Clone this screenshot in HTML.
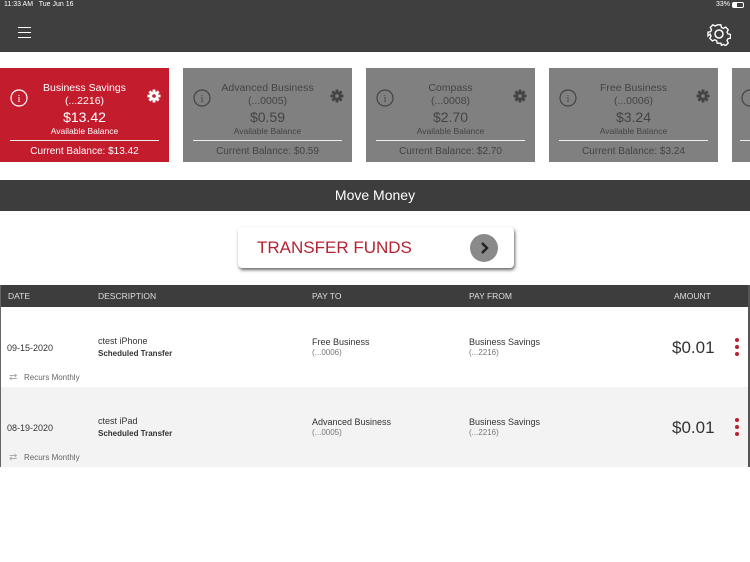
<!DOCTYPE html>
<html><head><meta charset="utf-8"><style>
*{margin:0;padding:0;box-sizing:border-box}
body{width:750px;height:562px;background:#fff;font-family:"Liberation Sans",sans-serif;position:relative;overflow:hidden}
.abs{position:absolute}
.hdr{left:0;top:0;width:750px;height:52px;background:#3f3f3f}
.card{top:68px;width:169px;height:94px;background:#808080;color:#444;text-align:center}
.card.red{background:#c21c2d;color:#fff}
.card .t{position:absolute;left:0;width:100%;}
.card .line{position:absolute;left:10px;right:10px;top:72px;height:1px;background:#eee}
.tbl{font-size:9px;color:#333}
</style></head><body>
<div class="abs hdr"></div>
<div class="abs" style="left:4px;top:1px;font-size:7px;color:#fff">11:33 AM &nbsp; Tue Jun 16</div>
<div class="abs" style="left:716px;top:1px;font-size:7px;color:#fff">33%</div>
<div class="abs" style="left:732px;top:2px;width:12px;height:6px;border:1px solid #fff;border-radius:2px"><div style="width:4px;height:4px;background:#fff"></div></div>
<div class="abs" style="left:18px;top:27px;width:13px;height:1px;background:#fff;box-shadow:0 5px 0 #fff,0 10px 0 #fff"></div>
<svg class="abs" style="left:707px;top:22px" width="24" height="24" viewBox="0 0 24 24" fill="none" stroke="#fff" stroke-width="1.5"><path d="M10 2h4l.6 2.8 2 1 2.6-1.3 2.8 2.8-1.3 2.6 1 2 2.8.6v4l-2.8.6-1 2 1.3 2.6-2.8 2.8-2.6-1.3-2 1L14 22h-4l-.6-2.8-2-1-2.6 1.3-2.8-2.8 1.3-2.6-1-2L0 14v-4l2.8-.6 1-2-1.3-2.6 2.8-2.8 2.6 1.3 2-1z" transform="translate(1 1) scale(.92)"/><circle cx="12" cy="12" r="4"/></svg>

<div class="abs card red" style="left:0">
<div class="t" style="top:14px;font-size:10.5px">Business Savings</div>
<div class="t" style="top:27px;font-size:10.5px">(...2216)</div>
<div class="t" style="top:41px;font-size:14px">$13.42</div>
<div class="t" style="top:58px;font-size:8.5px">Available Balance</div>
<div class="line"></div>
<div class="t" style="top:78px;font-size:10px">Current Balance: $13.42</div>
</div>
<div class="abs card" style="left:183px">
<div class="t" style="top:14px;font-size:10.5px">Advanced Business</div>
<div class="t" style="top:27px;font-size:10.5px">(...0005)</div>
<div class="t" style="top:41px;font-size:14px">$0.59</div>
<div class="t" style="top:58px;font-size:8.5px">Available Balance</div>
<div class="line"></div>
<div class="t" style="top:78px;font-size:10px">Current Balance: $0.59</div>
</div>
<div class="abs card" style="left:366px">
<div class="t" style="top:14px;font-size:10.5px">Compass</div>
<div class="t" style="top:27px;font-size:10.5px">(...0008)</div>
<div class="t" style="top:41px;font-size:14px">$2.70</div>
<div class="t" style="top:58px;font-size:8.5px">Available Balance</div>
<div class="line"></div>
<div class="t" style="top:78px;font-size:10px">Current Balance: $2.70</div>
</div>
<div class="abs card" style="left:549px">
<div class="t" style="top:14px;font-size:10.5px">Free Business</div>
<div class="t" style="top:27px;font-size:10.5px">(...0006)</div>
<div class="t" style="top:41px;font-size:14px">$3.24</div>
<div class="t" style="top:58px;font-size:8.5px">Available Balance</div>
<div class="line"></div>
<div class="t" style="top:78px;font-size:10px">Current Balance: $3.24</div>
</div>
<div class="abs card" style="left:732px;width:18px"><div class="line" style="left:8px;right:0"></div></div>

<svg class="abs" style="left:0;top:68px" width="750" height="94">
<defs>
<g id="gear">
<circle r="4.6"/>
<rect x="-1.4" y="-6.5" width="2.8" height="13"/>
<rect x="-1.4" y="-6.5" width="2.8" height="13" transform="rotate(45)"/>
<rect x="-1.4" y="-6.5" width="2.8" height="13" transform="rotate(90)"/>
<rect x="-1.4" y="-6.5" width="2.8" height="13" transform="rotate(135)"/>
</g>
</defs>
<g fill="none" stroke-width="1.2">
<circle cx="19" cy="30" r="8" stroke="#fff"/><circle cx="202" cy="30" r="8" stroke="#444"/><circle cx="385" cy="30" r="8" stroke="#444"/><circle cx="568" cy="30" r="8" stroke="#444"/><circle cx="750" cy="30" r="8" stroke="#444"/>
</g>
<g font-family="Liberation Serif" font-size="10" text-anchor="middle"><text x="19" y="34" fill="#fff">i</text><text x="202" y="34" fill="#444">i</text><text x="385" y="34" fill="#444">i</text><text x="568" y="34" fill="#444">i</text></g>
<use href="#gear" x="154" y="28" fill="#fff"/><circle cx="154" cy="28" r="1.8" fill="#c21c2d"/>
<use href="#gear" x="337" y="28" fill="#444"/><circle cx="337" cy="28" r="1.8" fill="#808080"/>
<use href="#gear" x="520" y="28" fill="#444"/><circle cx="520" cy="28" r="1.8" fill="#808080"/>
<use href="#gear" x="703" y="28" fill="#444"/><circle cx="703" cy="28" r="1.8" fill="#808080"/>
</svg>

<div class="abs" style="left:0;top:180px;width:750px;height:31px;background:#3d3d3d;color:#fff;font-size:14px;text-align:center;line-height:31px">Move Money</div>

<div class="abs" style="left:238px;top:227px;width:276px;height:41px;background:#fff;border-radius:4px;box-shadow:1px 2px 3px rgba(0,0,0,.6)"></div>
<div class="abs" style="left:257px;top:238px;font-size:17px;color:#b52232">TRANSFER FUNDS</div>
<div class="abs" style="left:470px;top:234px;width:28px;height:28px;border-radius:50%;background:#8a8a8a"></div>
<svg class="abs" style="left:470px;top:234px" width="28" height="28"><path d="M12 9l5 5-5 5" fill="none" stroke="#222" stroke-width="2.5"/></svg>

<div class="abs" style="left:0;top:285px;width:750px;height:22px;background:#3d3d3d;color:#ddd;font-size:8.5px;line-height:22px">
<span class="abs" style="left:8px">DATE</span><span class="abs" style="left:98px">DESCRIPTION</span><span class="abs" style="left:312px">PAY TO</span><span class="abs" style="left:469px">PAY FROM</span><span class="abs" style="left:674px">AMOUNT</span></div>
<div class="abs" style="left:0;top:387px;width:750px;height:80px;background:#f3f3f3"></div>
<div class="abs" style="left:0;top:285px;width:1px;height:182px;background:#666"></div>
<div class="abs" style="left:748px;top:285px;width:2px;height:182px;background:#555"></div>

<div class="abs tbl" style="left:0;top:307px;width:750px;height:80px">
<div class="abs" style="left:7px;top:36px">09-15-2020</div>
<div class="abs" style="left:98px;top:29px">ctest iPhone</div>
<div class="abs" style="left:98px;top:42px;font-weight:bold;font-size:8px">Scheduled Transfer</div>
<div class="abs" style="left:312px;top:30px">Free Business</div>
<div class="abs" style="left:312px;top:41px;font-size:8px;color:#777">(...0006)</div>
<div class="abs" style="left:469px;top:30px">Business Savings</div>
<div class="abs" style="left:469px;top:41px;font-size:8px;color:#777">(...2216)</div>
<div class="abs" style="left:672px;top:31px;font-size:17px">$0.01</div>
<div class="abs" style="left:24px;top:66px;font-size:8px;color:#666">Recurs Monthly</div>
<div class="abs" style="left:9px;top:67px;font-size:10px;color:#aaa;line-height:8px">⇄</div>
</div>
<div class="abs tbl" style="left:0;top:387px;width:750px;height:80px">
<div class="abs" style="left:7px;top:36px">08-19-2020</div>
<div class="abs" style="left:98px;top:29px">ctest iPad</div>
<div class="abs" style="left:98px;top:42px;font-weight:bold;font-size:8px">Scheduled Transfer</div>
<div class="abs" style="left:312px;top:30px">Advanced Business</div>
<div class="abs" style="left:312px;top:41px;font-size:8px;color:#777">(...0005)</div>
<div class="abs" style="left:469px;top:30px">Business Savings</div>
<div class="abs" style="left:469px;top:41px;font-size:8px;color:#777">(...2216)</div>
<div class="abs" style="left:672px;top:31px;font-size:17px">$0.01</div>
<div class="abs" style="left:24px;top:66px;font-size:8px;color:#666">Recurs Monthly</div>
<div class="abs" style="left:9px;top:67px;font-size:10px;color:#aaa;line-height:8px">⇄</div>
</div>
<svg class="abs" style="left:732px;top:337px" width="10" height="110"><g fill="#b52232"><circle cx="5" cy="3" r="2"/><circle cx="5" cy="10" r="2"/><circle cx="5" cy="17" r="2"/><circle cx="5" cy="83" r="2"/><circle cx="5" cy="90" r="2"/><circle cx="5" cy="97" r="2"/></g></svg>
</body></html>
